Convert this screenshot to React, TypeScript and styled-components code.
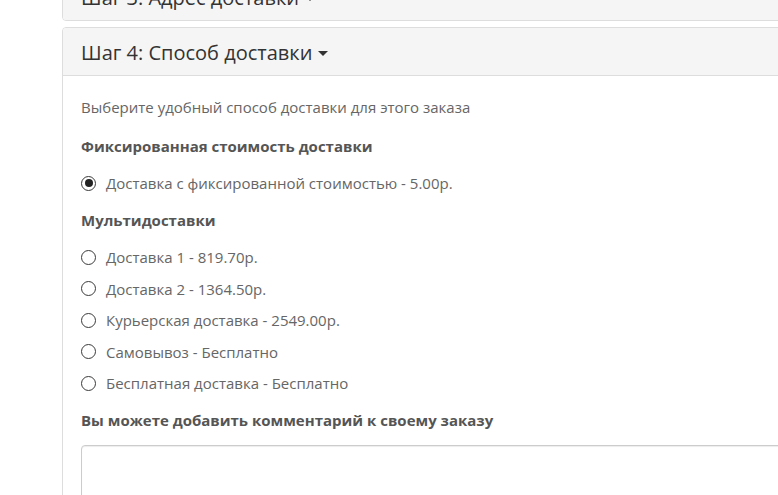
import React, { useState } from 'react'
import styled, { createGlobalStyle } from 'styled-components'

const GlobalStyle = createGlobalStyle`
html, body {
  margin: 0;
  padding: 0;
  background: #ffffff;
  overflow: hidden;
}
body {
  font-family: "Open Sans", "Liberation Sans", sans-serif;
  color: #666;
}
`;

const Page = styled.div`
padding-left: 62px;
margin-top: -28px;
width: 780px;
`;

const Panel = styled.div`
border: 1px solid #ddd;
border-radius: 4px;
background: #fff;
overflow: hidden;
& + & {
  margin-top: 6px;
}
`;

const PanelHeading = styled.div<{ $open?: boolean }>`
background: #f5f5f5;
height: 47px;
padding: 0 18px;
display: flex;
align-items: center;
border-bottom: ${(p) => (p.$open ? '1px solid #ddd' : 'none')};
`;

const PanelTitle = styled.h4`
margin: 0;
font-size: 20px;
font-weight: 400;
color: #333;
display: flex;
align-items: center;
line-height: 1;
padding-top: 2px;
`;

const Caret = styled.span`
display: inline-block;
width: 0;
height: 0;
margin-left: 6px;
margin-top: 2px;
border-top: 5px solid #333;
border-left: 5px solid transparent;
border-right: 5px solid transparent;
`;

const PanelBody = styled.div`
padding: 21px 18px 0;
height: 460px;
display: flex;
flex-direction: column;
`;

const Intro = styled.p`
margin: 0 0 19px;
font-size: 15px;
line-height: 20px;
color: #666;
`;

const GroupTitle = styled.p`
margin: 0 0 17px;
font-size: 15px;
line-height: 20px;
font-weight: 700;
color: #555;
`;

const OptionList = styled.div`
display: flex;
flex-direction: column;
gap: 11.5px;
margin-bottom: 17px;
`;

const Option = styled.label`
display: flex;
align-items: center;
gap: 10px;
height: 20px;
font-size: 15px;
line-height: 20px;
color: #666;
cursor: pointer;
`;

const RadioMark = styled.span<{ $checked?: boolean }>`
box-sizing: border-box;
width: 15px;
height: 15px;
border-radius: 50%;
border: 1.5px solid #3a3a3a;
display: flex;
align-items: center;
justify-content: center;
flex-shrink: 0;
&::after {
  content: '';
  width: 8px;
  height: 8px;
  border-radius: 50%;
  background: #222;
  display: ${(p) => (p.$checked ? 'block' : 'none')};
}
`;

const CommentTitle = styled(GroupTitle)`
margin-bottom: 15px;
`;

const Comment = styled.textarea`
box-sizing: border-box;
width: 100%;
height: 120px;
border: 1px solid #ccc;
border-radius: 4px;
box-shadow: inset 0 1px 1px rgba(0, 0, 0, 0.075);
resize: none;
font-family: inherit;
font-size: 14px;
padding: 6px 12px;
outline: none;
`;

const fixed = [{ id: 'flat', text: 'Доставка с фиксированной стоимостью - 5.00р.' }]

const multi = [
  { id: 'm1', text: 'Доставка 1 - 819.70р.' },
  { id: 'm2', text: 'Доставка 2 - 1364.50р.' },
  { id: 'm3', text: 'Курьерская доставка - 2549.00р.' },
  { id: 'm4', text: 'Самовывоз - Бесплатно' },
  { id: 'm5', text: 'Бесплатная доставка - Бесплатно' },
]

export default function App() {
  const [selected, setSelected] = useState('flat')

  const renderOptions = (items: { id: string; text: string }[]) => (
    <OptionList>
      {items.map((o) => (
        <Option key={o.id} onClick={() => setSelected(o.id)}>
          <RadioMark $checked={selected === o.id} />
          {o.text}
        </Option>
      ))}
    </OptionList>
  )

  return (
    <>
      <GlobalStyle />
      <Page>
        <Panel>
          <PanelHeading>
            <PanelTitle>Шаг 3: Адрес доставки <Caret /></PanelTitle>
          </PanelHeading>
        </Panel>
        <Panel>
          <PanelHeading $open>
            <PanelTitle>Шаг 4: Способ доставки <Caret /></PanelTitle>
          </PanelHeading>
          <PanelBody>
            <Intro>Выберите удобный способ доставки для этого заказа</Intro>
            <GroupTitle>Фиксированная стоимость доставки</GroupTitle>
            {renderOptions(fixed)}
            <GroupTitle>Мультидоставки</GroupTitle>
            {renderOptions(multi)}
            <CommentTitle>Вы можете добавить комментарий к своему заказу</CommentTitle>
            <Comment />
          </PanelBody>
        </Panel>
      </Page>
    </>
  )
}
